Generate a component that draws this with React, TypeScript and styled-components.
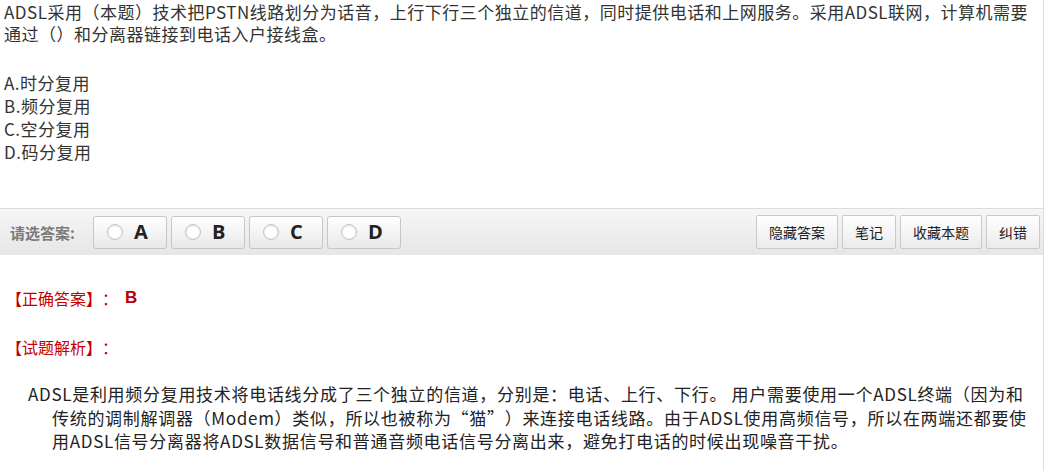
import React from "react";
import styled, { createGlobalStyle } from "styled-components";

const GlobalStyle = createGlobalStyle`
  html, body { margin: 0; padding: 0; background: #fff; }
  body {
    font-family: "Noto Sans CJK SC", "Noto Sans", sans-serif;
    color: #333;
    text-spacing-trim: space-all;
  }
  * { box-sizing: border-box; }
`;

const Page = styled.div`
  width: 1044px;
  min-height: 471px;
  border-right: 1px solid #dedede;
  overflow: hidden;
`;

const QuestionArea = styled.div`
  padding: 1px 3px 0 4px;
`;

const QuestionText = styled.div`
  font-size: 17px;
  line-height: 22px;
  letter-spacing: 0.5px;
`;

const OptionList = styled.div`
  margin-top: 26px;
  font-size: 17px;
  line-height: 23px;
  letter-spacing: 0.5px;
`;

const Option = styled.div``;

const Toolbar = styled.div`
  margin-top: 45px;
  height: 47px;
  border-top: 1px solid #dcdcdc;
  background: linear-gradient(#f6f6f6, #e6e6e6);
  display: flex;
  align-items: center;
  padding: 0 3px 0 10px;
`;

const Label = styled.span`
  font-size: 15px;
  font-weight: bold;
  color: #7a7a7a;
  margin-right: 18px;
`;

const ChoiceGroup = styled.div`
  display: flex;
  gap: 4px;
`;

const ChoiceButton = styled.button`
  width: 74px;
  height: 33px;
  border: 1px solid #c6c6c6;
  border-radius: 3px;
  background: linear-gradient(#ffffff, #e8e8e8);
  display: flex;
  align-items: center;
  padding: 0 0 0 13px;
  cursor: pointer;
  font-family: inherit;
`;

const Radio = styled.span`
  width: 16px;
  height: 16px;
  border-radius: 50%;
  border: 1px solid #c2c2c2;
  background: radial-gradient(circle at 50% 40%, #ffffff 55%, #ececec 100%);
  box-shadow: inset 0 1px 2px rgba(0, 0, 0, 0.12);
`;

const Letter = styled.span`
  margin-left: 11px;
  font-size: 20px;
  font-weight: bold;
  color: #222;
  font-family: "Open Sans", "Noto Sans", sans-serif;
  line-height: 1;
`;

const ActionGroup = styled.div`
  margin-left: auto;
  display: flex;
  gap: 4px;
`;

const ActionButton = styled.button`
  height: 34px;
  padding: 0 12px;
  border: 1px solid #c9c9c9;
  border-radius: 2px;
  background: linear-gradient(#ffffff, #ebebeb);
  font-family: "Noto Sans CJK SC", sans-serif;
  font-size: 14px;
  color: #222;
  cursor: pointer;
`;

const AnswerArea = styled.div`
  padding: 0 11px 0 6px;
`;

const SectionTitle = styled.div<{ $top: number }>`
  margin-top: ${(p) => p.$top}px;
  font-size: 16px;
  line-height: 24px;
  color: #c40000;
  display: flex;
  align-items: center;
`;

const AnswerValue = styled.span`
  margin-left: 7px;
  font-family: "Liberation Sans", sans-serif;
  font-weight: bold;
  font-size: 17px;
  color: #b80000;
`;

const Explanation = styled.div`
  margin-top: 23px;
  padding-left: 46px;
  text-indent: -24px;
  font-size: 17px;
  line-height: 23.5px;
  letter-spacing: 0.7px;
  color: #222;
`;

export default function App() {
  return (
    <>
      <GlobalStyle />
      <Page>
        <QuestionArea>
          <QuestionText>
            ADSL采用（本题）技术把PSTN线路划分为话音，上行下行三个独立的信道，同时提供电话和上网服务。采用ADSL联网，计算机需要通过（）和分离器链接到电话入户接线盒。
          </QuestionText>
          <OptionList>
            <Option>A.时分复用</Option>
            <Option>B.频分复用</Option>
            <Option>C.空分复用</Option>
            <Option>D.码分复用</Option>
          </OptionList>
        </QuestionArea>
        <Toolbar>
          <Label>请选答案:</Label>
          <ChoiceGroup>
            {["A", "B", "C", "D"].map((l) => (
              <ChoiceButton key={l}>
                <Radio />
                <Letter>{l}</Letter>
              </ChoiceButton>
            ))}
          </ChoiceGroup>
          <ActionGroup>
            <ActionButton>隐藏答案</ActionButton>
            <ActionButton>笔记</ActionButton>
            <ActionButton>收藏本题</ActionButton>
            <ActionButton>纠错</ActionButton>
          </ActionGroup>
        </Toolbar>
        <AnswerArea>
          <SectionTitle $top={31}>
            【正确答案】：<AnswerValue>B</AnswerValue>
          </SectionTitle>
          <SectionTitle $top={25}>【试题解析】：</SectionTitle>
          <Explanation>
            ADSL是利用频分复用技术将电话线分成了三个独立的信道，分别是：电话、上行、下行。 用户需要使用一个ADSL终端（因为和传统的调制解调器（Modem）类似，所以也被称为“猫”）来连接电话线路。由于ADSL使用高频信号，所以在两端还都要使用ADSL信号分离器将ADSL数据信号和普通音频电话信号分离出来，避免打电话的时候出现噪音干扰。
          </Explanation>
        </AnswerArea>
      </Page>
    </>
  );
}
